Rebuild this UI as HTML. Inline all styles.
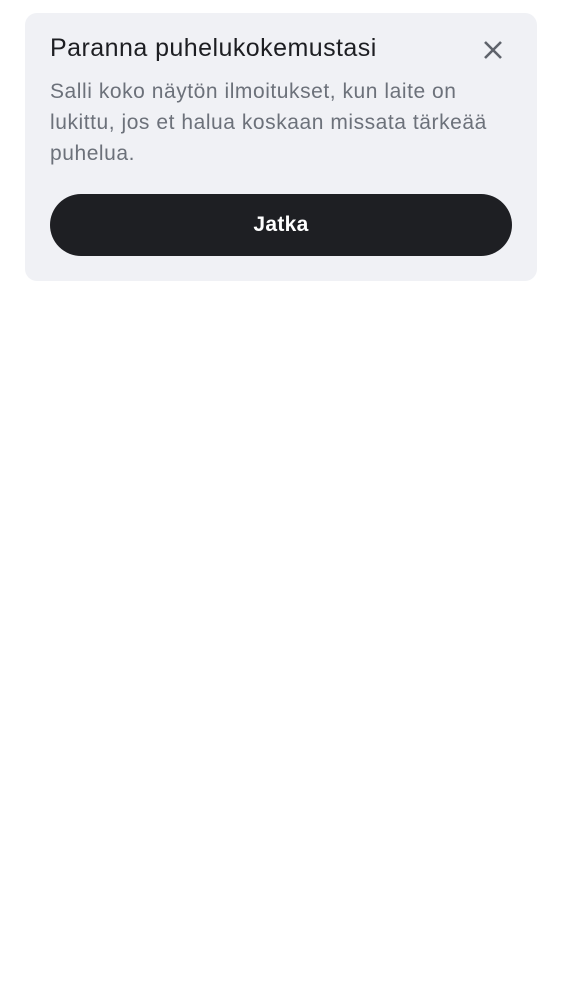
<!DOCTYPE html>
<html><head><meta charset="utf-8"><style>
html,body{margin:0;padding:0;background:#fff;width:562px;height:1000px;overflow:hidden;font-family:"Liberation Sans",sans-serif;}
.card{position:absolute;left:25px;top:13px;width:512px;height:268px;background:#f0f1f5;border-radius:12px;}
.title{position:absolute;left:25px;top:21px;font-size:25px;color:#1d1e22;white-space:nowrap;letter-spacing:0.45px;}
.body{position:absolute;left:25px;top:63px;width:480px;font-size:21px;line-height:31px;color:#6c717a;letter-spacing:0.55px;white-space:nowrap;}
.btn{position:absolute;left:25px;top:181px;width:462px;height:62px;border-radius:31px;background:#1e1f23;color:#fff;font-size:21px;font-weight:bold;text-align:center;line-height:62px;letter-spacing:0.3px;}
</style></head><body>
<div class="card">
<div class="title">Paranna puhelukokemustasi</div>
<svg style="position:absolute;left:458px;top:27px" width="20" height="20" viewBox="0 0 20 20"><path d="M2 2L18 18M18 2L2 18" stroke="#5f636b" stroke-width="2.6"/></svg>
<div class="body">Salli koko näytön ilmoitukset, kun laite on<br>lukittu, jos et halua koskaan missata tärkeää<br>puhelua.</div>
<div class="btn">Jatka</div>
</div>
</body></html>
